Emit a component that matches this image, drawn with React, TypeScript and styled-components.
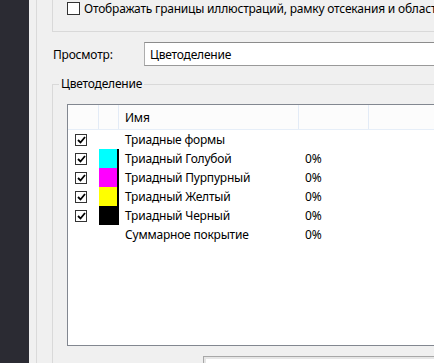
import React from "react";
import styled, { createGlobalStyle } from "styled-components";

const Global = createGlobalStyle`
  html, body { margin: 0; padding: 0; background: #f0f0f0; }
  body { font-family: "Noto Sans", "Liberation Sans", sans-serif; font-size: 12px; letter-spacing: -0.2px; color: #000; }
`;

const Page = styled.div`
  display: flex;
  width: 434px;
  height: 363px;
  overflow: hidden;
  background: #f0f0f0;
`;

const Sidebar = styled.div`
  flex: 0 0 29px;
  background: #2b2b33;
`;

const Gutter = styled.div`
  flex: 0 0 7px;
  border-right: 1px solid #dadada;
`;

const Main = styled.div`
  flex: 0 0 540px;
  display: flex;
  flex-direction: column;
  padding-left: 15px;
`;

const TopGroup = styled.div`
  box-sizing: border-box;
  height: 32px;
  border-left: 1px solid #d9d9d9;
  border-bottom: 1px solid #d9d9d9;
  padding: 2px 0 0 14px;
  display: flex;
  align-items: flex-start;
  gap: 4px;
`;

const OptionText = styled.span`
  line-height: 13px;
  white-space: nowrap;
`;

const Box = styled.span<{ $size?: number }>`
  box-sizing: border-box;
  flex: 0 0 auto;
  width: ${(p) => p.$size ?? 13}px;
  height: ${(p) => p.$size ?? 13}px;
  border: 1px solid #333;
  background: #fff;
  display: flex;
  align-items: center;
  justify-content: center;
`;

const ViewRow = styled.div`
  margin-top: 10px;
  height: 24px;
  display: flex;
  align-items: center;
`;

const ViewLabel = styled.span`
  flex: 0 0 92px;
  padding-left: 1px;
  box-sizing: border-box;
`;

const Select = styled.div`
  flex: 1;
  box-sizing: border-box;
  height: 24px;
  background: #fff;
  border: 1px solid #adadad;
  border-top-color: #8c8c8c;
  border-bottom-color: #999;
  display: flex;
  align-items: center;
  padding-left: 5px;
`;

const ColorGroup = styled.div`
  position: relative;
  margin-top: 18px;
  flex: 1;
  border-left: 1px solid #d9d9d9;
  border-top: 1px solid #d9d9d9;
  padding: 19px 0 0 14px;
  display: flex;
  flex-direction: column;
`;

const Legend = styled.span`
  position: absolute;
  top: -9px;
  left: 6px;
  padding: 0 2px;
  background: #f0f0f0;
  line-height: 16px;
`;

const ListBox = styled.div`
  box-sizing: border-box;
  height: 242px;
  background: #fff;
  border: 1px solid #828790;
  border-right: none;
`;

const Grid = styled.div<{ $header?: boolean }>`
  display: grid;
  grid-template-columns: 31px 20px 180px 70px 1fr;
  height: ${(p) => (p.$header ? "25px" : "19px")};
  box-sizing: border-box;
  background: ${(p) => (p.$header ? "#fcfcfc" : "#fff")};
  border-bottom: ${(p) => (p.$header ? "1px solid #e6eef8" : "none")};
`;

const HeadCell = styled.div<{ $pad?: number }>`
  box-sizing: border-box;
  border-right: 1px solid #e3ebf6;
  display: flex;
  align-items: center;
  padding-left: ${(p) => p.$pad ?? 0}px;
`;

const Cell = styled.div<{ $pad?: number }>`
  display: flex;
  align-items: center;
  padding-left: ${(p) => p.$pad ?? 0}px;
  white-space: nowrap;
`;

const Swatch = styled.div<{ $color: string }>`
  box-sizing: border-box;
  width: 20px;
  height: 19px;
  background: ${(p) => p.$color};
  border-right: 2px solid #000;
`;

const BottomBox = styled.div`
  margin-top: 10px;
  margin-left: 136px;
  flex: 1;
  background: #fff;
  border-top: 1px solid #a8a8a8;
  border-left: 1px solid #a8a8a8;
  box-shadow: inset 2px 2px 0 #e6e6e6;
`;

const Check = () => (
  <svg width="9" height="8" viewBox="0 0 9 8">
    <path d="M1 4 L3.5 6.5 L8 1" fill="none" stroke="#000" strokeWidth="1.8" />
  </svg>
);

type Row = { name: string; color?: string; value?: string; checked: boolean };

const rows: Row[] = [
  { name: "Триадные формы", checked: true },
  { name: "Триадный Голубой", color: "#00ffff", value: "0%", checked: true },
  { name: "Триадный Пурпурный", color: "#ff00ff", value: "0%", checked: true },
  { name: "Триадный Желтый", color: "#ffff00", value: "0%", checked: true },
  { name: "Триадный Черный", color: "#000000", value: "0%", checked: true },
  { name: "Суммарное покрытие", value: "0%", checked: false },
];

export default function App() {
  return (
    <>
      <Global />
      <Page>
        <Sidebar />
        <Gutter />
        <Main>
          <TopGroup>
            <Box />
            <OptionText>Отображать границы иллюстраций, рамку отсекания и области</OptionText>
          </TopGroup>
          <ViewRow>
            <ViewLabel>Просмотр:</ViewLabel>
            <Select>Цветоделение</Select>
          </ViewRow>
          <ColorGroup>
            <Legend>Цветоделение</Legend>
            <ListBox>
              <Grid $header>
                <HeadCell />
                <HeadCell />
                <HeadCell $pad={6}>Имя</HeadCell>
                <HeadCell />
                <div />
              </Grid>
              {rows.map((r) => (
                <Grid key={r.name}>
                  <Cell $pad={7}>
                    {r.checked && (
                      <Box $size={12}>
                        <Check />
                      </Box>
                    )}
                  </Cell>
                  <Cell>{r.color && <Swatch $color={r.color} />}</Cell>
                  <Cell $pad={6}>{r.name}</Cell>
                  <Cell $pad={6}>{r.value}</Cell>
                  <div />
                </Grid>
              ))}
            </ListBox>
            <BottomBox />
          </ColorGroup>
        </Main>
      </Page>
    </>
  );
}
